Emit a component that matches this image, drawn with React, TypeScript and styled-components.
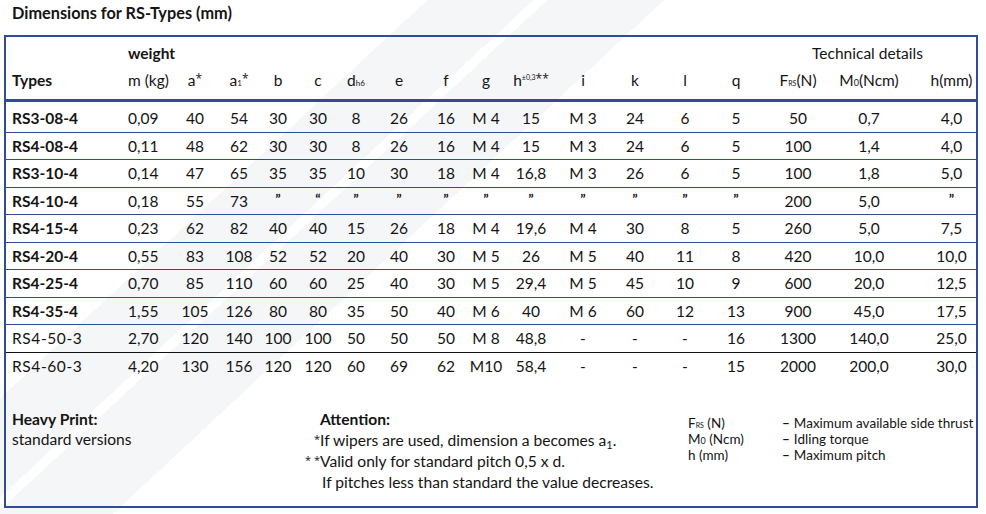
import React from "react";
import styled, { createGlobalStyle } from "styled-components";

const BLUE = "#2d4d98";
const FONT = `"Lato", "Open Sans", sans-serif`;
const STAR_FONT = `"Open Sans", sans-serif`;
const COLS = "119px 50px 40px 48px 30px 50px 26px 60px 34px 46px 44px 60px 44px 56px 46px 78px 64px 75px";

const GlobalStyle = createGlobalStyle`
  body {
    margin: 0;
    background: #fff;
    font-family: ${FONT};
    color: #141414;
  }
`;

type Row = { type: string; bold: boolean; values: string[] };

const rows: Row[] = [
  { type: "RS3-08-4", bold: true, values: ["0,09", "40", "54", "30", "30", "8", "26", "16", "M 4", "15", "M 3", "24", "6", "5", "50", "0,7", "4,0"] },
  { type: "RS4-08-4", bold: true, values: ["0,11", "48", "62", "30", "30", "8", "26", "16", "M 4", "15", "M 3", "24", "6", "5", "100", "1,4", "4,0"] },
  { type: "RS3-10-4", bold: true, values: ["0,14", "47", "65", "35", "35", "10", "30", "18", "M 4", "16,8", "M 3", "26", "6", "5", "100", "1,8", "5,0"] },
  { type: "RS4-10-4", bold: true, values: ["0,18", "55", "73", "”", "“", "”", "”", "”", "”", "”", "”", "”", "”", "”", "200", "5,0", "”"] },
  { type: "RS4-15-4", bold: true, values: ["0,23", "62", "82", "40", "40", "15", "26", "18", "M 4", "19,6", "M 4", "30", "8", "5", "260", "5,0", "7,5"] },
  { type: "RS4-20-4", bold: true, values: ["0,55", "83", "108", "52", "52", "20", "40", "30", "M 5", "26", "M 5", "40", "11", "8", "420", "10,0", "10,0"] },
  { type: "RS4-25-4", bold: true, values: ["0,70", "85", "110", "60", "60", "25", "40", "30", "M 5", "29,4", "M 5", "45", "10", "9", "600", "20,0", "12,5"] },
  { type: "RS4-35-4", bold: true, values: ["1,55", "105", "126", "80", "80", "35", "50", "40", "M 6", "40", "M 6", "60", "12", "13", "900", "45,0", "17,5"] },
  { type: "RS4-50-3", bold: false, values: ["2,70", "120", "140", "100", "100", "50", "50", "50", "M 8", "48,8", "-", "-", "-", "16", "1300", "140,0", "25,0"] },
  { type: "RS4-60-3", bold: false, values: ["4,20", "130", "156", "120", "120", "60", "69", "62", "M10", "58,4", "-", "-", "-", "15", "2000", "200,0", "30,0"] },
];

const Page = styled.div`
  width: 986px;
  height: 514px;
  box-sizing: border-box;
  background: linear-gradient(
    137deg,
    #fff 0 27.8%,
    #f5f6f8 27.8% 34.7%,
    #fff 34.7% 35.6%,
    #f5f6f8 35.6% 43.2%,
    #fff 43.2%
  );
`;

const Title = styled.h2`
  margin: 0;
  height: 35px;
  box-sizing: border-box;
  padding: 3px 0 0 12px;
  font-size: 16.3px;
  line-height: 20px;
  font-weight: 700;
`;

const Frame = styled.div`
  margin-left: 4px;
  width: 974px;
  height: 473px;
  box-sizing: border-box;
  border: 2px solid ${BLUE};
  font-size: 15.5px;
`;

const HeadTop = styled.div`
  display: grid;
  grid-template-columns: ${COLS};
  height: 32px;
  align-items: center;
  white-space: nowrap;
`;

const HeadBottom = styled.div`
  display: grid;
  grid-template-columns: ${COLS};
  height: 33px;
  box-sizing: border-box;
  padding-bottom: 8px;
  align-items: center;
  border-bottom: 3px solid ${BLUE};
  white-space: nowrap;
`;

const DataRow = styled.div<{ $first?: boolean; $line: "blue" | "black" | "none" }>`
  display: grid;
  grid-template-columns: ${COLS};
  box-sizing: border-box;
  height: ${(p) => (p.$first ? 30.5 : 27.5)}px;
  padding-top: ${(p) => (p.$first ? 3 : 0)}px;
  align-items: center;
  border-bottom: ${(p) => (p.$line === "none" ? "0" : `1px solid ${p.$line === "blue" ? BLUE : "#111"}`)};
  white-space: nowrap;
`;

const Cell = styled.div<{ $align?: "left" | "center"; $pad?: number; $bold?: boolean; $span?: number; $spaced?: boolean }>`
  text-align: ${(p) => p.$align ?? "center"};
  padding-left: ${(p) => p.$pad ?? 0}px;
  font-weight: ${(p) => (p.$bold ? 700 : 400)};
  letter-spacing: ${(p) => (p.$spaced ? "0.6px" : "0")};
  ${(p) => (p.$span ? `grid-column: span ${p.$span};` : "")}
`;

const Ditto = styled.span`
  font-weight: 700;
  font-size: 14px;
  position: relative;
  top: -3px;
`;

const Sup = styled.sup`
  font-family: ${STAR_FONT};
  font-size: 12px;
  vertical-align: 3px;
  line-height: 0;
`;

const Tiny = styled.span<{ $raise?: number; $size?: number }>`
  font-size: ${(p) => p.$size ?? 7}px;
  vertical-align: ${(p) => p.$raise ?? 0}px;
  line-height: 0;
`;

const Footer = styled.div`
  display: grid;
  grid-template-columns: 290px 386px 94px auto;
  margin-top: 29px;
  padding-left: 6px;
`;

const NoteBlock = styled.div`
  font-size: 15.6px;
  line-height: 20px;
`;

const Heading = styled.div<{ $indent?: number }>`
  font-weight: 700;
  padding-left: ${(p) => p.$indent ?? 0}px;
`;

const Notes = styled.div`
  display: grid;
  grid-template-columns: 18px auto;
  font-size: 15.6px;
  line-height: 21px;
`;

const Mark = styled.span`
  font-family: ${STAR_FONT};
  text-align: right;
  font-size: 11px;
  letter-spacing: 0;
  position: relative;
  top: -2px;
`;

const NoteText = styled.span<{ $indent?: number }>`
  padding-left: ${(p) => p.$indent ?? 0}px;
`;

const Legend = styled.div`
  margin-top: 6px;
  font-size: 13.5px;
  line-height: 16px;
`;

const LegendItem = styled.div`
  &::before {
    content: "–";
    font-weight: 700;
    margin-right: 4px;
  }
`;

const colSymbols: React.ReactNode[] = [
  <>m (kg)</>,
  <>a<Sup>*</Sup></>,
  <>a<Tiny $size={8}>1</Tiny><Sup>*</Sup></>,
  <>b</>,
  <>c</>,
  <>d<Tiny $size={8}>h6</Tiny></>,
  <>e</>,
  <>f</>,
  <>g</>,
  <>h<Tiny $raise={6}>±0,3</Tiny><Sup>**</Sup></>,
  <>i</>,
  <>k</>,
  <>l</>,
  <>q</>,
  <>F<Tiny>RS</Tiny>(N)</>,
  <>M<Tiny $size={9}>0</Tiny>(Ncm)</>,
  <>h(mm)</>,
];

const cellProps = (i: number) => {
  if (i === 0) return { $align: "left" as const, $pad: 3 };
  if (i === 16) return { $pad: 26 };
  return {};
};

const App = () => {
  return (
    <Page>
      <GlobalStyle />
      <Title>Dimensions for RS-Types (mm)</Title>
      <Frame>
        <HeadTop>
          <Cell />
          <Cell $align="left" $pad={3} $bold>
            weight
          </Cell>
          <Cell $span={13} />
          <Cell $span={3}>Technical details</Cell>
        </HeadTop>
        <HeadBottom>
          <Cell $align="left" $pad={6} $bold>
            Types
          </Cell>
          {colSymbols.map((s, i) => (
            <Cell key={i} {...cellProps(i)}>
              {s}
            </Cell>
          ))}
        </HeadBottom>
        {rows.map((r, ri) => (
          <DataRow
            key={r.type}
            $first={ri === 0}
            $line={ri === rows.length - 1 ? "none" : ri === rows.length - 2 ? "black" : "blue"}
          >
            <Cell $align="left" $pad={6} $bold={r.bold} $spaced={!r.bold}>
              {r.type}
            </Cell>
            {r.values.map((v, i) => (
              <Cell key={i} {...cellProps(i)}>
                {v === "”" || v === "“" ? <Ditto>{v}</Ditto> : v}
              </Cell>
            ))}
          </DataRow>
        ))}
        <Footer>
          <NoteBlock>
            <Heading>Heavy Print:</Heading>
            <div>standard versions</div>
          </NoteBlock>
          <Notes>
            <span />
            <Heading>Attention:</Heading>
            <Mark>*</Mark>
            <NoteText>
              If wipers are used, dimension a becomes a<Tiny $size={11} $raise={-3}>1</Tiny>.
            </NoteText>
            <Mark>* *</Mark>
            <NoteText>Valid only for standard pitch 0,5 x d.</NoteText>
            <span />
            <NoteText $indent={2}>If pitches less than standard the value decreases.</NoteText>
          </Notes>
          <Legend>
            <div>
              F<Tiny $size={7}>RS</Tiny> (N)
            </div>
            <div>
              M<Tiny $size={9}>0</Tiny> (Ncm)
            </div>
            <div>h (mm)</div>
          </Legend>
          <Legend>
            <LegendItem>Maximum available side thrust</LegendItem>
            <LegendItem>Idling torque</LegendItem>
            <LegendItem>Maximum pitch</LegendItem>
          </Legend>
        </Footer>
      </Frame>
    </Page>
  );
};

export default App;
